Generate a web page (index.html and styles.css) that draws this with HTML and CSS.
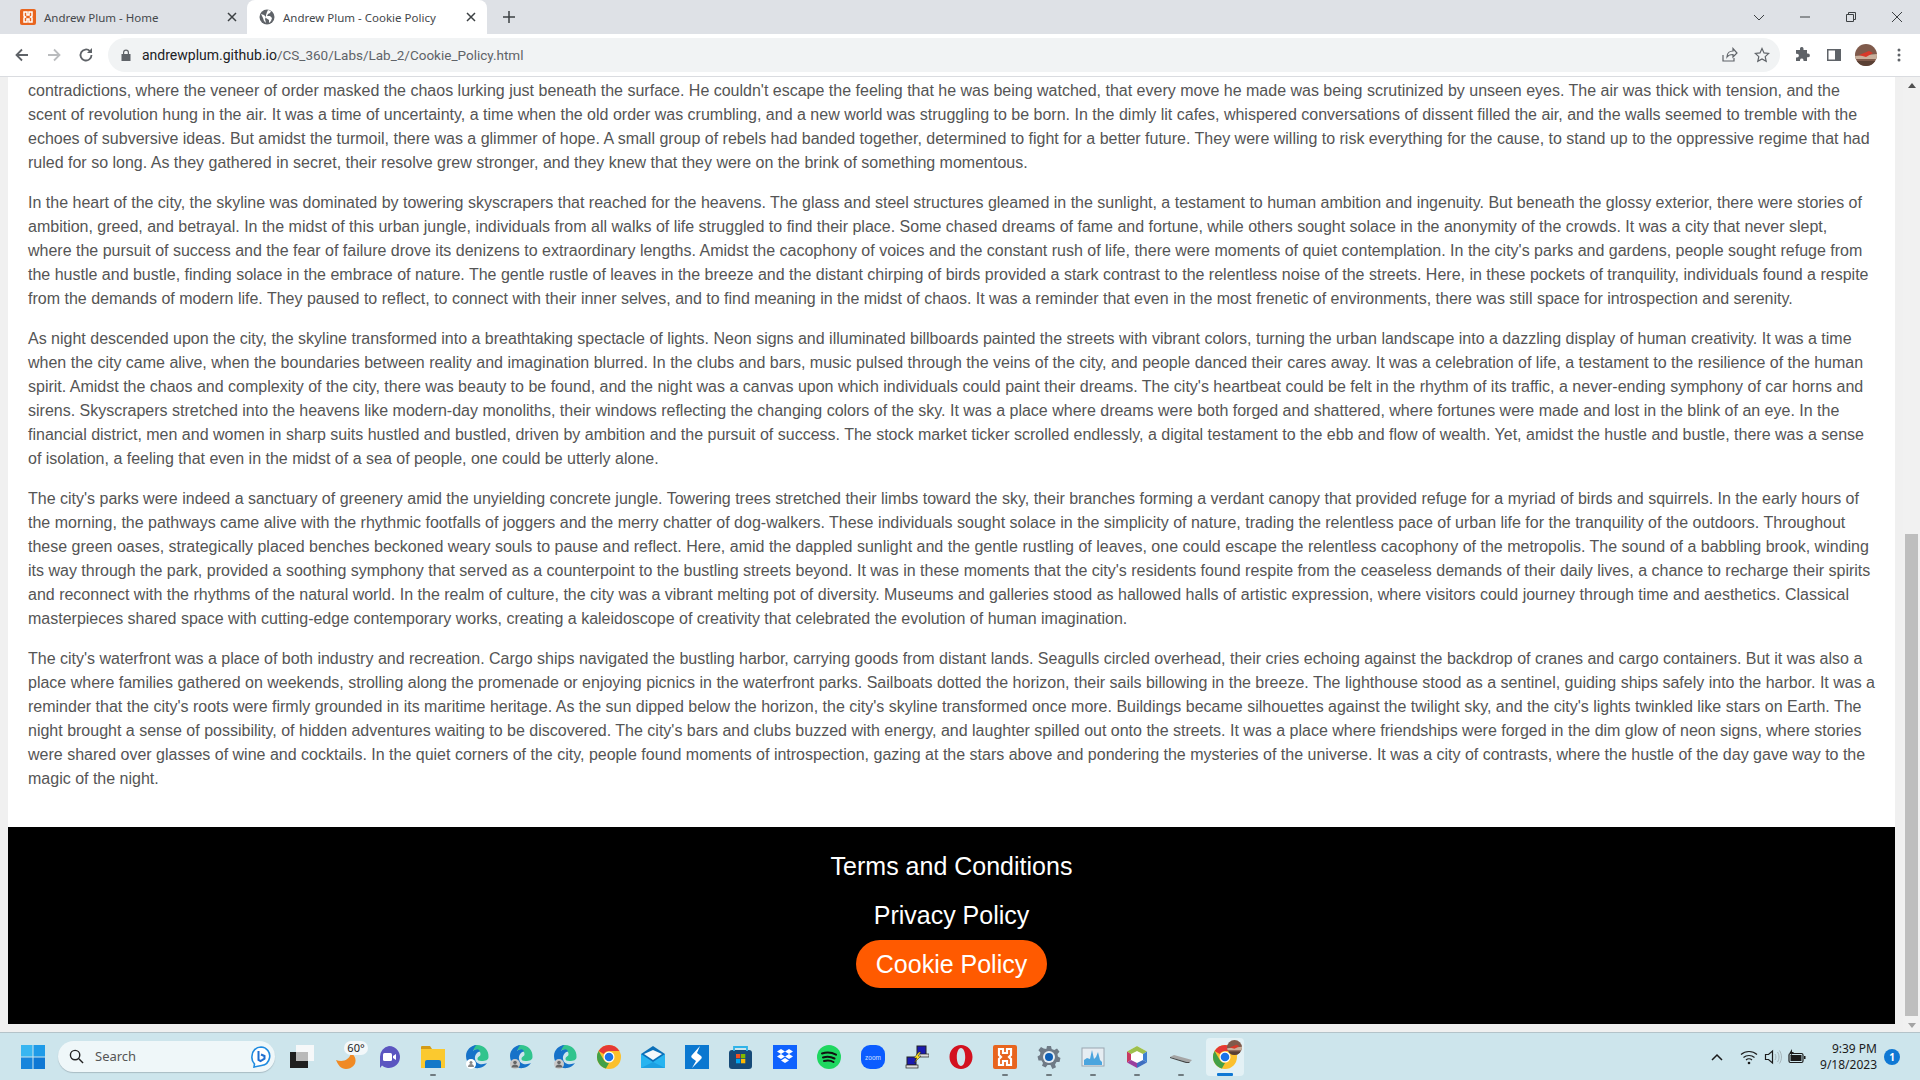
FILE: index.html
```html
<!DOCTYPE html>
<html lang="en">

<head>
    <meta charset="UTF-8">
    <title>Andrew Plum - Cookie Policy</title>
    <link rel="stylesheet" href="styles.css">
</head>

<body>
    <div class="window">

        <!-- tab strip -->
        <div class="tabstrip">
            <div class="tab">
                <svg class="favicon" viewBox="0 0 16 16">
                    <rect width="16" height="16" rx="2" fill="#e8651f" />
                    <path d="M4 3h3v3h2V3h3v4l-1.5 1L12 9v4H9v-3H7v3H4V9l1.500-1L4 7z" fill="none" stroke="#fff" stroke-width="1.500" />
                </svg>
                <span class="tab-title">Andrew Plum - Home</span>
                <svg class="tab-close" viewBox="0 0 10 10"><path d="M1 1l8 8M9 1l-8 8" /></svg>
            </div>
            <div class="tab active">
                <svg class="favicon" viewBox="0 0 16 16">
                    <circle cx="8" cy="8" r="7.500" fill="#5f6368" />
                    <path d="M2 5l3 1 2 2-1 2 1 4-2-2-1-3zM9 1l3 1-1 2-2 1-1 2 3 0 2 2-1 3-2 2 0-3-3-2 0-3 1-3z" fill="#fff" />
                </svg>
                <span class="tab-title">Andrew Plum - Cookie Policy</span>
                <svg class="tab-close" viewBox="0 0 10 10"><path d="M1 1l8 8M9 1l-8 8" /></svg>
            </div>
            <svg class="new-tab" viewBox="0 0 12 12"><path d="M6 0v12M0 6h12" /></svg>
            <div class="win-controls">
                <svg viewBox="0 0 12 12"><path d="M1 4l5 5 5-5" /></svg>
                <svg viewBox="0 0 12 12"><path d="M1 6h10" /></svg>
                <svg viewBox="0 0 12 12"><path d="M1.500 3.500h7v7h-7zM3.500 3.500v-2h7v7h-2" /></svg>
                <svg viewBox="0 0 12 12"><path d="M1 1l10 10M11 1L1 11" /></svg>
            </div>
        </div>

        <!-- address bar -->
        <div class="toolbar">
            <svg class="nav-btn" viewBox="0 0 16 16"><path d="M14 8H3M8 2.500L2.500 8 8 13.500" /></svg>
            <svg class="nav-btn off" viewBox="0 0 16 16"><path d="M2 8h11M8 2.500L13.500 8 8 13.500" /></svg>
            <svg class="nav-btn" viewBox="0 0 16 16"><path d="M13.500 8a5.500 5.500 0 1 1-1.600-3.900" /><path class="solid" d="M14 1v5H9z" /></svg>
            <div class="omnibox">
                <svg class="lock" viewBox="0 0 10 12"><path d="M2 5V3.500a3 3 0 0 1 6 0V5h1.500v7H.5V5zM3.200 5h3.600V3.500a1.800 1.800 0 0 0-3.600 0z" /></svg>
                <span class="url"><b>andrewplum.github.io</b>/CS_360/Labs/Lab_2/Cookie_Policy.html</span>
                <svg class="omni-icon" viewBox="0 0 16 16"><path d="M1 8v6h11v-3M5 10c0-4 3-6 6-6V1.500L15 6l-4 4V7.500c-3 0-5 1-6 2.500z" /></svg>
                <svg class="omni-icon" viewBox="0 0 16 16"><path d="M8 1.500l2 4.400 4.700.5-3.500 3.200 1 4.700L8 11.900l-4.200 2.400 1-4.700L1.300 6.400 6 5.900z" /></svg>
            </div>
            <div class="tool-icons">
                <svg viewBox="0 0 16 16"><path fill="#5f6368" d="M6 1.500a1.800 1.800 0 0 1 3.500 0V3H13v3.500h1a1.900 1.900 0 0 1 0 3.800h-1V14H9.500v-1a1.800 1.800 0 0 0-3.500 0v1H2v-3.500h1a1.900 1.900 0 0 0 0-3.800H2V3h4z" /></svg>
                <svg viewBox="0 0 16 16"><path fill="#5f6368" d="M1 2h14v12H1zM2.500 3.500v9H9v-9z" /></svg>
                <svg class="avatar" viewBox="0 0 22 22"><use href="#photo" /></svg>
                <svg viewBox="0 0 16 16"><circle cx="8" cy="3" r="1.500" fill="#5f6368" /><circle cx="8" cy="8" r="1.500" fill="#5f6368" /><circle cx="8" cy="13" r="1.500" fill="#5f6368" /></svg>
            </div>
        </div>

        <!-- web page -->
        <div class="viewport">
            <div class="page">
                <main class="article">
                    <p>contradictions, where the veneer of order masked the chaos lurking just beneath the surface. He couldn't escape the feeling that he was being watched, that every move he made was being scrutinized by unseen eyes. The air was thick with tension, and the scent of revolution hung in the air. It was a time of uncertainty, a time when the old order was crumbling, and a new world was struggling to be born. In the dimly lit cafes, whispered conversations of dissent filled the air, and the walls seemed to tremble with the echoes of subversive ideas. But amidst the turmoil, there was a glimmer of hope. A small group of rebels had banded together, determined to fight for a better future. They were willing to risk everything for the cause, to stand up to the oppressive regime that had ruled for so long. As they gathered in secret, their resolve grew stronger, and they knew that they were on the brink of something momentous.</p>
                    <p>In the heart of the city, the skyline was dominated by towering skyscrapers that reached for the heavens. The glass and steel structures gleamed in the sunlight, a testament to human ambition and ingenuity. But beneath the glossy exterior, there were stories of ambition, greed, and betrayal. In the midst of this urban jungle, individuals from all walks of life struggled to find their place. Some chased dreams of fame and fortune, while others sought solace in the anonymity of the crowds. It was a city that never slept, where the pursuit of success and the fear of failure drove its denizens to extraordinary lengths. Amidst the cacophony of voices and the constant rush of life, there were moments of quiet contemplation. In the city's parks and gardens, people sought refuge from the hustle and bustle, finding solace in the embrace of nature. The gentle rustle of leaves in the breeze and the distant chirping of birds provided a stark contrast to the relentless noise of the streets. Here, in these pockets of tranquility, individuals found a respite from the demands of modern life. They paused to reflect, to connect with their inner selves, and to find meaning in the midst of chaos. It was a reminder that even in the most frenetic of environments, there was still space for introspection and serenity.</p>
                    <p>As night descended upon the city, the skyline transformed into a breathtaking spectacle of lights. Neon signs and illuminated billboards painted the streets with vibrant colors, turning the urban landscape into a dazzling display of human creativity. It was a time when the city came alive, when the boundaries between reality and imagination blurred. In the clubs and bars, music pulsed through the veins of the city, and people danced their cares away. It was a celebration of life, a testament to the resilience of the human spirit. Amidst the chaos and complexity of the city, there was beauty to be found, and the night was a canvas upon which individuals could paint their dreams. The city's heartbeat could be felt in the rhythm of its traffic, a never-ending symphony of car horns and sirens. Skyscrapers stretched into the heavens like modern-day monoliths, their windows reflecting the changing colors of the sky. It was a place where dreams were both forged and shattered, where fortunes were made and lost in the blink of an eye. In the financial district, men and women in sharp suits hustled and bustled, driven by ambition and the pursuit of success. The stock market ticker scrolled endlessly, a digital testament to the ebb and flow of wealth. Yet, amidst the hustle and bustle, there was a sense of isolation, a feeling that even in the midst of a sea of people, one could be utterly alone.</p>
                    <p>The city's parks were indeed a sanctuary of greenery amid the unyielding concrete jungle. Towering trees stretched their limbs toward the sky, their branches forming a verdant canopy that provided refuge for a myriad of birds and squirrels. In the early hours of the morning, the pathways came alive with the rhythmic footfalls of joggers and the merry chatter of dog-walkers. These individuals sought solace in the simplicity of nature, trading the relentless pace of urban life for the tranquility of the outdoors. Throughout these green oases, strategically placed benches beckoned weary souls to pause and reflect. Here, amid the dappled sunlight and the gentle rustling of leaves, one could escape the relentless cacophony of the metropolis. The sound of a babbling brook, winding its way through the park, provided a soothing symphony that served as a counterpoint to the bustling streets beyond. It was in these moments that the city's residents found respite from the ceaseless demands of their daily lives, a chance to recharge their spirits and reconnect with the rhythms of the natural world. In the realm of culture, the city was a vibrant melting pot of diversity. Museums and galleries stood as hallowed halls of artistic expression, where visitors could journey through time and aesthetics. Classical masterpieces shared space with cutting-edge contemporary works, creating a kaleidoscope of creativity that celebrated the evolution of human imagination.</p>
                    <p>The city's waterfront was a place of both industry and recreation. Cargo ships navigated the bustling harbor, carrying goods from distant lands. Seagulls circled overhead, their cries echoing against the backdrop of cranes and cargo containers. But it was also a place where families gathered on weekends, strolling along the promenade or enjoying picnics in the waterfront parks. Sailboats dotted the horizon, their sails billowing in the breeze. The lighthouse stood as a sentinel, guiding ships safely into the harbor. It was a reminder that the city's roots were firmly grounded in its maritime heritage. As the sun dipped below the horizon, the city's skyline transformed once more. Buildings became silhouettes against the twilight sky, and the city's lights twinkled like stars on Earth. The night brought a sense of possibility, of hidden adventures waiting to be discovered. The city's bars and clubs buzzed with energy, and laughter spilled out onto the streets. It was a place where friendships were forged in the dim glow of neon signs, where stories were shared over glasses of wine and cocktails. In the quiet corners of the city, people found moments of introspection, gazing at the stars above and pondering the mysteries of the universe. It was a city of contrasts, where the hustle of the day gave way to the magic of the night.</p>
                </main>
                <footer class="footer">
                    <a class="foot-link" href="#">Terms and Conditions</a>
                    <a class="foot-link" href="#">Privacy Policy</a>
                    <a class="foot-link on" href="#">Cookie Policy</a>
                </footer>
            </div>
            <div class="scrollbar">
                <span class="arrow up"></span>
                <div class="thumb"></div>
                <span class="arrow down"></span>
            </div>
        </div>

        <!-- windows taskbar -->
        <div class="taskbar">
            <svg class="start" viewBox="0 0 24 24">
                <path fill="#38b6f1" d="M0 0h11.500v11.500H0z" /><path fill="#1f9be8" d="M12.500 0H24v11.500H12.500z" />
                <path fill="#1785dc" d="M0 12.500h11.500V24H0z" /><path fill="#0f78d4" d="M12.500 12.500H24V24H12.500z" />
            </svg>
            <div class="search">
                <svg class="search-icon" viewBox="0 0 16 16"><circle cx="6.500" cy="6.500" r="5" /><path d="M10.500 10.500L15 15" /></svg>
                <span class="search-text">Search</span>
                <svg class="bing" viewBox="0 0 20 22">
                    <path d="M10 1a9 9 0 0 1 8.500 11c-.8 4-4 7-8 7.500L3 21l.5-3A9.500 9.500 0 0 1 1 10a9 9 0 0 1 9-9z" fill="#fff" stroke="#1f8be0" stroke-width="1.600" />
                    <path d="M7.500 5v9l2 1 4-2.300V10L10 8.500" fill="none" stroke="#1f6fd0" stroke-width="2" />
                </svg>
            </div>
            <div class="apps">
                <!-- task view -->
                <div class="app taskview"><svg viewBox="0 0 24 24"><rect x="6" y="0" width="18" height="16" fill="#f6f8f9" /><rect x="0" y="7" width="18" height="16" fill="#1f1f1f" /><rect x="6" y="7" width="12" height="9" fill="#b9b9b9" /></svg></div>
                <div class="app">
                    <svg viewBox="0 0 24 24"><path d="M3 15c6 2 13 1 15-7 8 5 5 16-5 16-5 0-8-4-10-9z" fill="#f08a24" /></svg>
                    <span class="temp">60°</span>
                </div>
                <div class="app"><svg viewBox="0 0 24 24"><path d="M12 1a11 11 0 1 1-7 19.500L3 23V12A11 11 0 0 1 12 1z" fill="#5b55c0" /><rect x="6" y="8" width="9" height="8" rx="1.500" fill="#fff" /><path d="M16 11l3-2v6l-3-2z" fill="#fff" /></svg></div>
                <div class="app running"><svg viewBox="0 0 24 24"><path d="M0 2a1 1 0 0 1 1-1h8l2 3H0z" fill="#d49b16" /><path d="M0 4h24v19H0z" fill="#fbc92f" /><path d="M6 15h12a2 2 0 0 1 2 2v6H4v-6a2 2 0 0 1 2-2z" fill="#1379c9" /></svg></div>
                <div class="app"><svg viewBox="0 0 24 24"><use href="#edge" /><circle cx="6" cy="19" r="5" fill="#fff" /><circle cx="6" cy="17.500" r="1.500" fill="#888" /><path d="M3 22c0-4 6-4 6 0z" fill="#888" /></svg></div>
                <div class="app"><svg viewBox="0 0 24 24"><use href="#edge" /><circle cx="6" cy="19" r="5" fill="#c9c9c9" /><circle cx="6" cy="17.500" r="1.800" fill="#666" /><path d="M2.500 22.500c0-4 7-4 7 0z" fill="#666" /></svg></div>
                <div class="app"><svg viewBox="0 0 24 24"><use href="#edge" /><circle cx="6" cy="19" r="5" fill="#c9c9c9" /><circle cx="6" cy="17.500" r="1.800" fill="#666" /><path d="M2.500 22.500c0-4 7-4 7 0z" fill="#666" /></svg></div>
                <div class="app"><svg viewBox="0 0 24 24"><use href="#chrome" /></svg></div>
                <!-- mail -->
                <div class="app"><svg viewBox="0 0 24 24"><path d="M12 1l12 8v14H0V9z" fill="#0b6fb8" /><path d="M3 9l9-4 9 4-9 6z" fill="#f4f8fb" /><path d="M0 9l12 8 12-8v14H0z" fill="#27b4f0" /><path d="M12 17l12 6H0z" fill="#1593d8" opacity=".6" /></svg></div>
                <div class="app"><svg viewBox="0 0 24 24"><rect width="24" height="24" fill="#0b78d0" /><path d="M15 1L7 10c-1 1-1 2 0 3l4 3-4 7 9-9c1-1 1-2 0-3l-4-3z" fill="#fff" /></svg></div>
                <div class="app"><svg viewBox="0 0 24 24"><rect x="0" y="5" width="23" height="19" rx="3" fill="#164a78" /><path d="M5 6V2h13v4" fill="none" stroke="#2fb3e8" stroke-width="1.800" /><rect x="7" y="9" width="4.300" height="4.300" fill="#f25022" /><rect x="12" y="9" width="4.300" height="4.300" fill="#7fba00" /><rect x="7" y="14" width="4.300" height="4.300" fill="#00a4ef" /><rect x="12" y="14" width="4.300" height="4.300" fill="#ffb900" /></svg></div>
                <div class="app"><svg viewBox="0 0 24 24"><rect width="24" height="24" fill="#0f62fe" /><path d="M8 4l4 2.500L8 9 4 6.500zM16 4l4 2.500L16 9l-4-2.500zM8 9l4 2.500L8 14l-4-2.500zM16 9l4 2.500L16 14l-4-2.500zM8 15.500l4-2.500 4 2.500-4 2.500z" fill="#fff" /></svg></div>
                <div class="app"><svg viewBox="0 0 24 24"><circle cx="12" cy="12" r="12" fill="#1ed760" /><path d="M5 8.500c5-1.500 10-1 14 1.200M6 12.500c4-1.200 8-.8 11.500 1M7 16c3-.8 7-.5 9.500 1" fill="none" stroke="#111" stroke-width="2" stroke-linecap="round" /></svg></div>
                <div class="app"><svg viewBox="0 0 24 24"><rect width="24" height="24" rx="9" fill="#0b5cff" /><text x="12" y="14.500" class="zoom-text">zoom</text></svg></div>
                <div class="app"><svg viewBox="0 0 24 24"><rect x="12" y="1" width="9" height="9" fill="#1a1ab0" stroke="#222" /><rect x="12" y="9" width="12" height="3" fill="#ddd" stroke="#222" stroke-width=".7" /><rect x="2" y="12" width="9" height="8" fill="#1a1ab0" stroke="#222" /><rect x="1" y="20" width="12" height="3" fill="#ddd" stroke="#222" stroke-width=".7" /><path d="M14 7l-5 6h3l-3 5 7-7h-3l3-4z" fill="#ffe020" stroke="#222" stroke-width=".5" /></svg></div>
                <div class="app"><svg viewBox="0 0 24 24"><path fill-rule="evenodd" d="M12 0c6.500 0 11.500 5.400 11.500 12S18.500 24 12 24 .500 18.600.500 12 5.500 0 12 0zm0 3c-2.500 0-4.200 4-4.200 9s1.700 9 4.200 9 4.200-4 4.200-9-1.700-9-4.200-9z" fill="#d3111f" /></svg></div>
                <div class="app running"><svg viewBox="0 0 24 24"><rect width="24" height="24" rx="2" fill="#e8651f" /><path d="M6 4h4v4h4V4h4v6l-2 2 2 2v6h-4v-4h-4v4H6v-6l2-2-2-2z" fill="none" stroke="#fff" stroke-width="2.200" /></svg></div>
                <div class="app running"><svg viewBox="0 0 24 24"><path d="M10 1h4l.7 3 2.600 1 2.700-1.500 2.500 3.200-2 2.300.4 2.500 2.600 1.500-1 3.900-3 .2-1.500 2.300 1 2.800-3.600 1.800L13.500 20h-3l-1.900 2.500L5 20.700l1-2.800L4.500 15.600l-3-.2-1-3.900L3 10l.4-2.500-2-2.300L4 2l2.700 1.500L9.300 4z" fill="#6f7a86" /><circle cx="12" cy="12" r="6" fill="#e6eef3" /><circle cx="12" cy="12" r="4" fill="#0f5fb5" /></svg></div>
                <div class="app running"><svg viewBox="0 0 24 24"><rect x="1" y="3" width="22" height="18" fill="#e6edf2" stroke="#9aa6b0" /><path d="M3 20V15l3-2 3 1 2-9 2 9 2-2 2-5 2 8 2 2v3z" fill="#4aa5de" /></svg></div>
                <div class="app running"><svg viewBox="0 0 24 24"><path d="M12 1l10 5.500v11L12 23 2 17.500v-11z" fill="#fff" /><path d="M12 1l10 5.500-4 2.500-6-3-6 3-4-2.500z" fill="#9ec04c" /><path d="M2 6.500L6 9v6l-4 2.500z" fill="#c73a60" /><path d="M22 6.500L18 9v6l4 2.500z" fill="#3e7fd0" /><path d="M2 17.500L6 15l6 3v5z" fill="#9a3f9e" /><path d="M22 17.500L18 15l-6 3v5z" fill="#3f6fc0" /></svg></div>
                <div class="app running"><svg viewBox="0 0 24 24"><path d="M1 12l4-2 18 5-2 2-3 0z" fill="#a5a5a5" /><path d="M1 12l17 5 3 0-1 1-3 0L1 13z" fill="#444" /></svg></div>
                <div class="app current">
                    <svg viewBox="0 0 24 24"><use href="#chrome" /></svg>
                    <svg class="app-badge" viewBox="0 0 22 22"><use href="#photo" /></svg>
                </div>
            </div>
            <div class="tray">
                <svg class="tray-icon chevron" viewBox="0 0 12 8"><path d="M1 7l5-5 5 5" /></svg>
                <svg class="tray-icon" viewBox="0 0 18 16"><path d="M1 5.500c4.500-4 11.500-4 16 0M3.500 8.500c3-2.700 8-2.700 11 0M6 11c1.600-1.400 4.400-1.400 6 0" /><circle class="solid" cx="9" cy="14" r="1.300" /></svg>
                <svg class="tray-icon" viewBox="0 0 18 16"><path d="M1.500 5.500h3L8.500 2v12l-4-3.500h-3z" /><path class="faint" d="M11 5c1.200 1.800 1.200 4.200 0 6M13.500 3c2 3 2 7 0 10M15.500 1.500c2.600 4 2.600 9 0 13" /></svg>
                <svg class="tray-icon" viewBox="0 0 18 16"><rect x="1" y="4.500" width="14" height="9" rx="1.500" /><rect class="solid" x="2.500" y="6" width="11" height="6" /><path class="solid" d="M16 7h1.500v3H16zM4 0L1.500 4h2L2.500 7 6 3H4z" /></svg>
                <div class="clock"><span>9:39 PM</span><span>9/18/2023</span></div>
                <span class="badge">1</span>
            </div>
        </div>
    </div>

    <!-- icons that appear more than once -->
    <svg class="defs" viewBox="0 0 24 24">
        <defs>
            <clipPath id="photo-clip"><circle cx="11" cy="11" r="11" /></clipPath>
            <g id="photo" clip-path="url(#photo-clip)">
                <rect width="22" height="22" fill="#7f5a4b" />
                <path d="M0 12l22-2v5H0z" fill="#c9b09c" />
                <path d="M4 11l10-4 4 2-7 4z" fill="#d8392a" />
                <rect y="17" width="22" height="5" fill="#5a4034" />
            </g>
            <g id="edge">
                <path d="M12 0c7 0 12 5 11.500 12 0 3-3 4-7 4-3 0-4-1-4-2 0-3 3-2 3-5S12 4 9 5C4 7 2 12 3 16 2 7 6 0 12 0z" fill="#31c48d" />
                <path d="M12 0C6 0 1 5 1 11c0 8 7 13 13 12 3-.5 6-2 8-5-4 2-11 2-12-4-.5-4 2-7 5-7.500C14 3 10 4 8 6c1-3 3-6 4-6z" fill="#1672c9" />
            </g>
            <g id="chrome">
                <circle cx="12" cy="12" r="12" fill="#fbc02d" />
                <path d="M12 0a12 12 0 0 1 10.400 6H12a6 6 0 0 0-5.200 3L1.600 6A12 12 0 0 1 12 0z" fill="#e53935" />
                <path d="M1.600 6l5.200 9a6 6 0 0 0 5.200 3l-3.100 5.600A12 12 0 0 1 1.600 6z" fill="#43a047" />
                <circle cx="12" cy="12" r="5.500" fill="#fff" />
                <circle cx="12" cy="12" r="4.300" fill="#1a73e8" />
            </g>
        </defs>
    </svg>
</body>

</html>
```

FILE: styles.css
```css
* {
    margin: 0;
    padding: 0;
    box-sizing: border-box;
}

html,
body {
    height: 100%;
    overflow: hidden;
}

.window {
    display: flex;
    flex-direction: column;
    height: 1080px;
    font-family: "Noto Sans", sans-serif;
}

.defs {
    position: absolute;
    width: 0;
    height: 0;
}

/* tab strip */
.tabstrip {
    display: flex;
    align-items: center;
    height: 34px;
    flex-shrink: 0;
    background: #dee1e6;
}

.tab {
    display: flex;
    align-items: center;
    width: 240px;
    height: 34px;
    padding: 0 3px 0 20px;
    font-size: 11.500px;
    color: #45484c;
}

.tab.active {
    margin-left: 7px;
    padding: 0 11px 0 12px;
    background: #fff;
    border-radius: 8px 8px 0 0;
}

.favicon {
    width: 16px;
    height: 16px;
    flex-shrink: 0;
}

.tab-title {
    flex: 1;
    margin-left: 8px;
    white-space: nowrap;
}

.tab-close {
    width: 10px;
    height: 10px;
    fill: none;
    stroke: #3c4043;
    stroke-width: 1.500;
}

.new-tab {
    width: 12px;
    height: 12px;
    margin-left: 16px;
    fill: none;
    stroke: #3c4043;
    stroke-width: 1.500;
}

.win-controls {
    display: flex;
    gap: 34px;
    margin-left: auto;
    margin-right: 17px;
}

.win-controls svg {
    width: 12px;
    height: 12px;
    fill: none;
    stroke: #3c4043;
    stroke-width: 1;
}

/* address bar */
.toolbar {
    display: flex;
    align-items: center;
    height: 43px;
    flex-shrink: 0;
    padding: 0 0 1px 14px;
    background: #fff;
    border-bottom: 1px solid #dadce0;
}

.nav-btn {
    width: 16px;
    height: 16px;
    margin-right: 16px;
    fill: none;
    stroke: #5f6368;
    stroke-width: 1.800;
}

.nav-btn.off {
    stroke: #babcbe;
}

.nav-btn .solid {
    fill: #5f6368;
    stroke: none;
}

.omnibox {
    display: flex;
    align-items: center;
    width: 1672px;
    height: 34px;
    margin-left: -2px;
    padding: 0 10px 0 13px;
    background: #f1f3f4;
    border-radius: 17px;
}

.lock {
    width: 10px;
    height: 12px;
    fill: #5f6368;
}

.url {
    flex: 1;
    margin-left: 11px;
    font-family: Roboto, sans-serif;
    font-size: 13.500px;
    color: #5f6368;
}

.url b {
    font-size: 14px;
    font-weight: 400;
    color: #202124;
}

.omni-icon {
    width: 16px;
    height: 16px;
    margin-left: 16px;
    fill: none;
    stroke: #5f6368;
    stroke-width: 1.200;
}

.tool-icons {
    display: flex;
    align-items: center;
    gap: 16px;
    margin-left: 14px;
}

.tool-icons svg {
    width: 16px;
    height: 16px;
}

.tool-icons .avatar {
    width: 22px;
    height: 22px;
    margin: 0 -2px 0 -3px;
}

/* web page */
.viewport {
    display: flex;
    flex: 1;
    min-height: 0;
    background: #f0f0f0;
}

.page {
    flex: 1;
    min-width: 0;
    display: flex;
    flex-direction: column;
    padding: 0 8px;
    overflow: hidden;
    font-family: "Liberation Sans", Arial, sans-serif;
}

.article {
    flex: 1;
    padding: 2px 20px 0;
    background: #fff;
    font-size: 16px;
    line-height: 24px;
    color: #555;
}

.article p {
    margin-bottom: 16px;
}

.footer {
    display: flex;
    flex-direction: column;
    align-items: center;
    gap: 1px;
    height: 197px;
    margin-bottom: 8px;
    padding-top: 15px;
    background: #000;
}

.foot-link {
    height: 48px;
    padding: 0 20px;
    font-size: 25px;
    line-height: 48px;
    color: #fff;
    text-decoration: none;
}

.foot-link.on {
    background: #ff5a00;
    border-radius: 24px;
}

.scrollbar {
    display: flex;
    flex-direction: column;
    align-items: center;
    width: 17px;
    background: #f1f1f1;
}

.arrow {
    width: 0;
    height: 0;
    margin-top: 6px;
    border-left: 4px solid transparent;
    border-right: 4px solid transparent;
}

.arrow.up {
    border-bottom: 5px solid #505050;
}

.arrow.down {
    margin-top: auto;
    margin-bottom: 4px;
    border-top: 5px solid #a3a3a3;
}

.thumb {
    width: 13px;
    height: 482px;
    margin-top: 446px;
    background: #bebebe;
}

/* windows taskbar */
.taskbar {
    display: flex;
    align-items: center;
    height: 48px;
    flex-shrink: 0;
    background: #cde5ec;
    border-top: 1px solid #b4c3c9;
}

.start {
    width: 24px;
    height: 24px;
    margin-left: 21px;
    flex-shrink: 0;
}

.search {
    display: flex;
    align-items: center;
    width: 217px;
    height: 31px;
    margin-left: 13px;
    padding: 0 4px 0 11px;
    background: #eff7f9;
    border-radius: 16px;
    box-shadow: 0 1px 1px #a9bcc4;
}

.search-icon {
    width: 15px;
    height: 15px;
    fill: none;
    stroke: #222;
    stroke-width: 1.500;
}

.search-text {
    flex: 1;
    margin-left: 11px;
    font-size: 13px;
    line-height: 15px;
    color: #555;
}

.bing {
    width: 20px;
    height: 22px;
}

.apps {
    display: flex;
    margin-left: 4px;
}

.app {
    position: relative;
    display: flex;
    align-items: center;
    justify-content: center;
    width: 44px;
    height: 38px;
}

.app svg {
    width: 24px;
    height: 24px;
}

.taskview svg {
    margin-left: 2px;
}

.app.running::after,
.app.current::after {
    content: "";
    position: absolute;
    left: 19px;
    bottom: 0;
    width: 6px;
    height: 2px;
    background: #6f7b80;
    border-radius: 1px;
}

.app.current {
    width: 38px;
    margin: 0 3px;
    background: #e3f1f5;
    border-radius: 4px;
}

.app.current::after {
    left: 11px;
    width: 16px;
    height: 3px;
    background: #0f78d4;
}

.app .app-badge {
    position: absolute;
    top: 2px;
    left: 21px;
    width: 15px;
    height: 15px;
}

.temp {
    position: absolute;
    top: 3px;
    left: 21px;
    width: 24px;
    font-size: 11px;
    line-height: 14px;
    text-align: center;
    color: #222;
    background: #f3f8fa;
    border-radius: 7px;
}

.zoom-text {
    font-family: "Liberation Sans", sans-serif;
    font-size: 6.500px;
    text-anchor: middle;
    fill: #cfe0ff;
}

.tray {
    display: flex;
    align-items: center;
    margin-left: auto;
}

.tray-icon {
    width: 18px;
    height: 16px;
    margin-right: 6px;
    fill: none;
    stroke: #1b1b1b;
    stroke-width: 1.200;
}

.tray-icon .solid {
    fill: #1b1b1b;
    stroke: none;
}

.tray-icon .faint {
    stroke: #9aa6ab;
    stroke-width: .8;
}

.chevron {
    width: 12px;
    height: 8px;
    margin-right: 17px;
    stroke-width: 1.500;
}

.clock {
    display: flex;
    flex-direction: column;
    align-items: flex-end;
    width: 65px;
    font-size: 12px;
    line-height: 16px;
    color: #1b1b1b;
}

.badge {
    width: 16px;
    height: 16px;
    margin: 0 20px 0 7px;
    font-size: 10px;
    font-weight: 700;
    line-height: 16px;
    text-align: center;
    color: #fff;
    background: #0f78d4;
    border-radius: 50%;
}
```
